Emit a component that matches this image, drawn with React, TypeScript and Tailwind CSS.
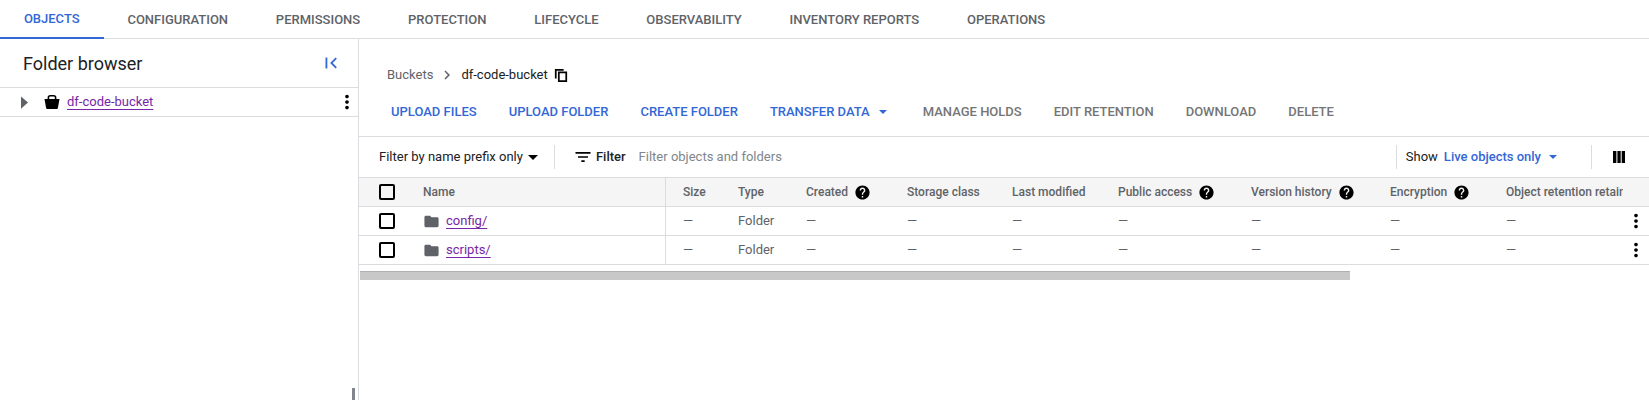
const I = ({ d, className }: { d: string; className?: string }) => (
  <svg viewBox="0 0 24 24" fill="currentColor" className={className}><path d={d} /></svg>
);
const more = "M12 8c1.1 0 2-.9 2-2s-.9-2-2-2-2 .9-2 2 .9 2 2 2zm0 2c-1.1 0-2 .9-2 2s.9 2 2 2 2-.9 2-2-.9-2-2-2zm0 6c-1.1 0-2 .9-2 2s.9 2 2 2 2-.9 2-2-.9-2-2-2z";
const help = "M12 2C6.48 2 2 6.48 2 12s4.48 10 10 10 10-4.48 10-10S17.52 2 12 2zm1 17h-2v-2h2v2zm2.07-7.75l-.9.92C13.45 12.9 13 13.5 13 15h-2v-.5c0-1.1.45-2.1 1.17-2.83l1.24-1.26c.37-.36.59-.86.59-1.41 0-1.1-.9-2-2-2s-2 .9-2 2H8c0-2.21 1.79-4 4-4s4 1.79 4 4c0 .88-.36 1.68-.93 2.25z";
const folder = "M10 4H4c-1.1 0-2 .9-2 2v12c0 1.1.9 2 2 2h16c1.1 0 2-.9 2-2V8c0-1.1-.9-2-2-2h-8l-2-2z";

const tabs = ["OBJECTS", "CONFIGURATION", "PERMISSIONS", "PROTECTION", "LIFECYCLE", "OBSERVABILITY", "INVENTORY REPORTS", "OPERATIONS"];
const cols: { t: string; w: string; h?: boolean }[] = [
  { t: "Size", w: "w-[55px]" },
  { t: "Type", w: "w-[68px]" },
  { t: "Created", w: "w-[101px]", h: true },
  { t: "Storage class", w: "w-[105px]" },
  { t: "Last modified", w: "w-[106px]" },
  { t: "Public access", w: "w-[133px]", h: true },
  { t: "Version history", w: "w-[139px]", h: true },
  { t: "Encryption", w: "w-[116px]", h: true },
];

const Check = () => <div className="w-[16px] h-[16px] border-2 border-black rounded-[2px]" />;

const Row = ({ name }: { name: string }) => (
  <div className="flex h-[29px] items-center border-b border-[#dadce0] text-[#5f6368]">
    <div className="w-[307px] h-full flex items-center border-r border-[#dadce0] shrink-0">
      <div className="ml-[20px] mr-[28px] flex"><Check /></div>
      <I d={folder} className="w-[17px] h-[17px] text-[#5f6368] mr-[6px]" />
      <a className="text-[#7627a8] underline underline-offset-[3px] decoration-[#7627a8]">{name}</a>
    </div>
    <div className="w-[17px] shrink-0" />
    <div className="w-[55px] shrink-0">—</div>
    <div className="w-[68px] shrink-0">Folder</div>
    {cols.slice(2).map((c) => <div key={c.t} className={`${c.w} shrink-0`}>—</div>)}
    <div className="w-[119px] shrink-0">—</div>
    <I d={more} className="w-[22px] h-[22px] text-black" />
  </div>
);

export default function App() {
  return (
    <div className="relative h-[400px] w-[1649px] overflow-hidden bg-white text-[13px]" style={{ fontFamily: "Roboto, sans-serif" }}>
      <div className="flex h-[39px] border-b border-[#dadce0] font-medium text-[#5f6368]">
        {tabs.map((t, i) => (
          <div key={t} className={`px-[23.9px] flex items-center h-[39px] ${i === 0 ? "text-[#3367d6] border-b-[2px] border-[#3367d6]" : ""}`}>{t}</div>
        ))}
      </div>
      <div className="flex h-[361px]">
        <aside className="w-[359px] shrink-0 border-r border-[#dadce0]">
          <div className="h-[49px] flex items-center justify-between border-b border-[#dadce0] pl-[23px] pr-[16px]">
            <span className="text-[18px] text-[#202124]">Folder browser</span>
            <I d="M18.41 16.59L13.82 12l4.59-4.59L17 6l-6 6 6 6zM6 6h2v12H6z" className="w-[22px] h-[22px] text-[#3367d6]" />
          </div>
          <div className="h-[29px] flex items-center border-b border-[#dadce0]">
            <svg viewBox="0 0 8 14" className="w-[7px] h-[13px] ml-[21px] text-[#5f6368]" fill="currentColor"><path d="M0 0l8 7-8 7z" /></svg>
            <svg viewBox="0 0 16 16" className="w-[16px] h-[16px] ml-[16px]" fill="black"><path d="M.5 5h15l-1.6 9a1.2 1.2 0 0 1-1.2 1H3.3a1.2 1.2 0 0 1-1.2-1z" /><path d="M3.6 6V3.6A2.6 2.6 0 0 1 6.2 1h3.6a2.6 2.6 0 0 1 2.6 2.6V6h-1.6V3.6a1 1 0 0 0-1-1H6.2a1 1 0 0 0-1 1V6z" /></svg>
            <a className="ml-[7px] text-[#7627a8] underline underline-offset-[3px]">df-code-bucket</a>
            <I d={more} className="w-[22px] h-[22px] text-black ml-auto" />
          </div>
        </aside>
        <main className="flex-1 min-w-0">
          <div className="h-[98px] border-b border-[#dadce0] pt-[26px]">
            <div className="flex items-center h-[20px] pl-[28px] text-[#5f6368]">
              <span>Buckets</span>
              <svg viewBox="0 0 24 24" className="w-[18px] h-[18px] mx-[5px]" fill="#5f6368"><path d="M10 6L8.59 7.41 13.17 12l-4.58 4.59L10 18l6-6z" /></svg>
              <span className="text-[#202124]">df-code-bucket</span>
              <svg viewBox="0 0 16 16" className="w-[14px] h-[14px] ml-[6px] text-black" fill="none" stroke="currentColor" strokeWidth="2"><path d="M2 12V2h9" /><path d="M5.5 5h8.5v10H5.5z" /></svg>
            </div>
            <div className="flex items-center gap-8 pl-[32px] mt-[17px] h-[20px] font-medium text-[#3367d6]">
              <span>UPLOAD FILES</span>
              <span>UPLOAD FOLDER</span>
              <span>CREATE FOLDER</span>
              <span className="flex items-center">TRANSFER DATA<span className="ml-[9px] mr-[4px] border-x-[4px] border-x-transparent border-t-[4px] border-t-[#3367d6]" /></span>
              <span className="text-[#757575]">MANAGE HOLDS</span>
              <span className="text-[#757575]">EDIT RETENTION</span>
              <span className="text-[#757575]">DOWNLOAD</span>
              <span className="text-[#757575]">DELETE</span>
            </div>
          </div>
          <div className="flex items-center h-[40px] pl-[20px]">
            <span className="text-[#202124]">Filter by name prefix only</span>
            <span className="ml-[5px] border-x-[5px] border-x-transparent border-t-[5px] border-t-black" />
            <div className="w-px h-[24px] bg-[#dadce0] ml-[16px]" />
            <I d="M10 18h4v-2h-4v2zM3 6v2h18V6H3zm3 7h12v-2H6v2z" className="w-[20px] h-[20px] ml-[18px] mr-[-2px] text-black" />
            <span className="ml-[5px] font-medium text-[#202124]">Filter</span>
            <span className="ml-[13px] text-[#80868b]">Filter objects and folders</span>
            <div className="ml-auto w-px h-[24px] bg-[#dadce0]" />
            <span className="ml-[9px] text-[#202124]">Show</span>
            <span className="ml-[6px] text-[#3367d6] font-medium">Live objects only</span>
            <span className="ml-[8px] border-x-[4px] border-x-transparent border-t-[4px] border-t-[#3367d6]" />
            <div className="ml-[34px] w-px h-[24px] bg-[#dadce0]" />
            <svg viewBox="0 0 14 14" className="w-[14px] h-[14px] ml-[20px] mr-[23px]" fill="black"><path d="M1 1h3.4v12H1zM5.4 1h3.3v12H5.4zM9.7 1H13v12H9.7z" /></svg>
          </div>
          <div className="flex h-[30px] items-center border-y border-[#dadce0] bg-[#f5f5f5] font-medium text-[12px] text-[#5f6368]">
            <div className="w-[307px] h-full flex items-center border-r border-[#dadce0] shrink-0">
              <div className="ml-[20px] mr-[28px] flex"><Check /></div>
              <span>Name</span>
            </div>
            <div className="w-[17px] shrink-0" />
            {cols.map((c) => (
              <div key={c.t} className={`${c.w} shrink-0 flex items-center`}>
                {c.t}{c.h && <I d={help} className="w-[17px] h-[17px] ml-[6px] text-black" />}
              </div>
            ))}
            <div className="w-[117px] shrink-0 overflow-hidden whitespace-nowrap">Object retention retain</div>
          </div>
          <Row name="config/" />
          <Row name="scripts/" />
          <div className="mt-[6px] ml-px w-[990px] h-[9px] bg-[#c8c8c8] border-t border-[#b0b0b0]" />
        </main>
      </div>
      <div className="absolute left-[352px] top-[388px] w-[3px] h-[12px] bg-[#80868b]" />
    </div>
  );
}
